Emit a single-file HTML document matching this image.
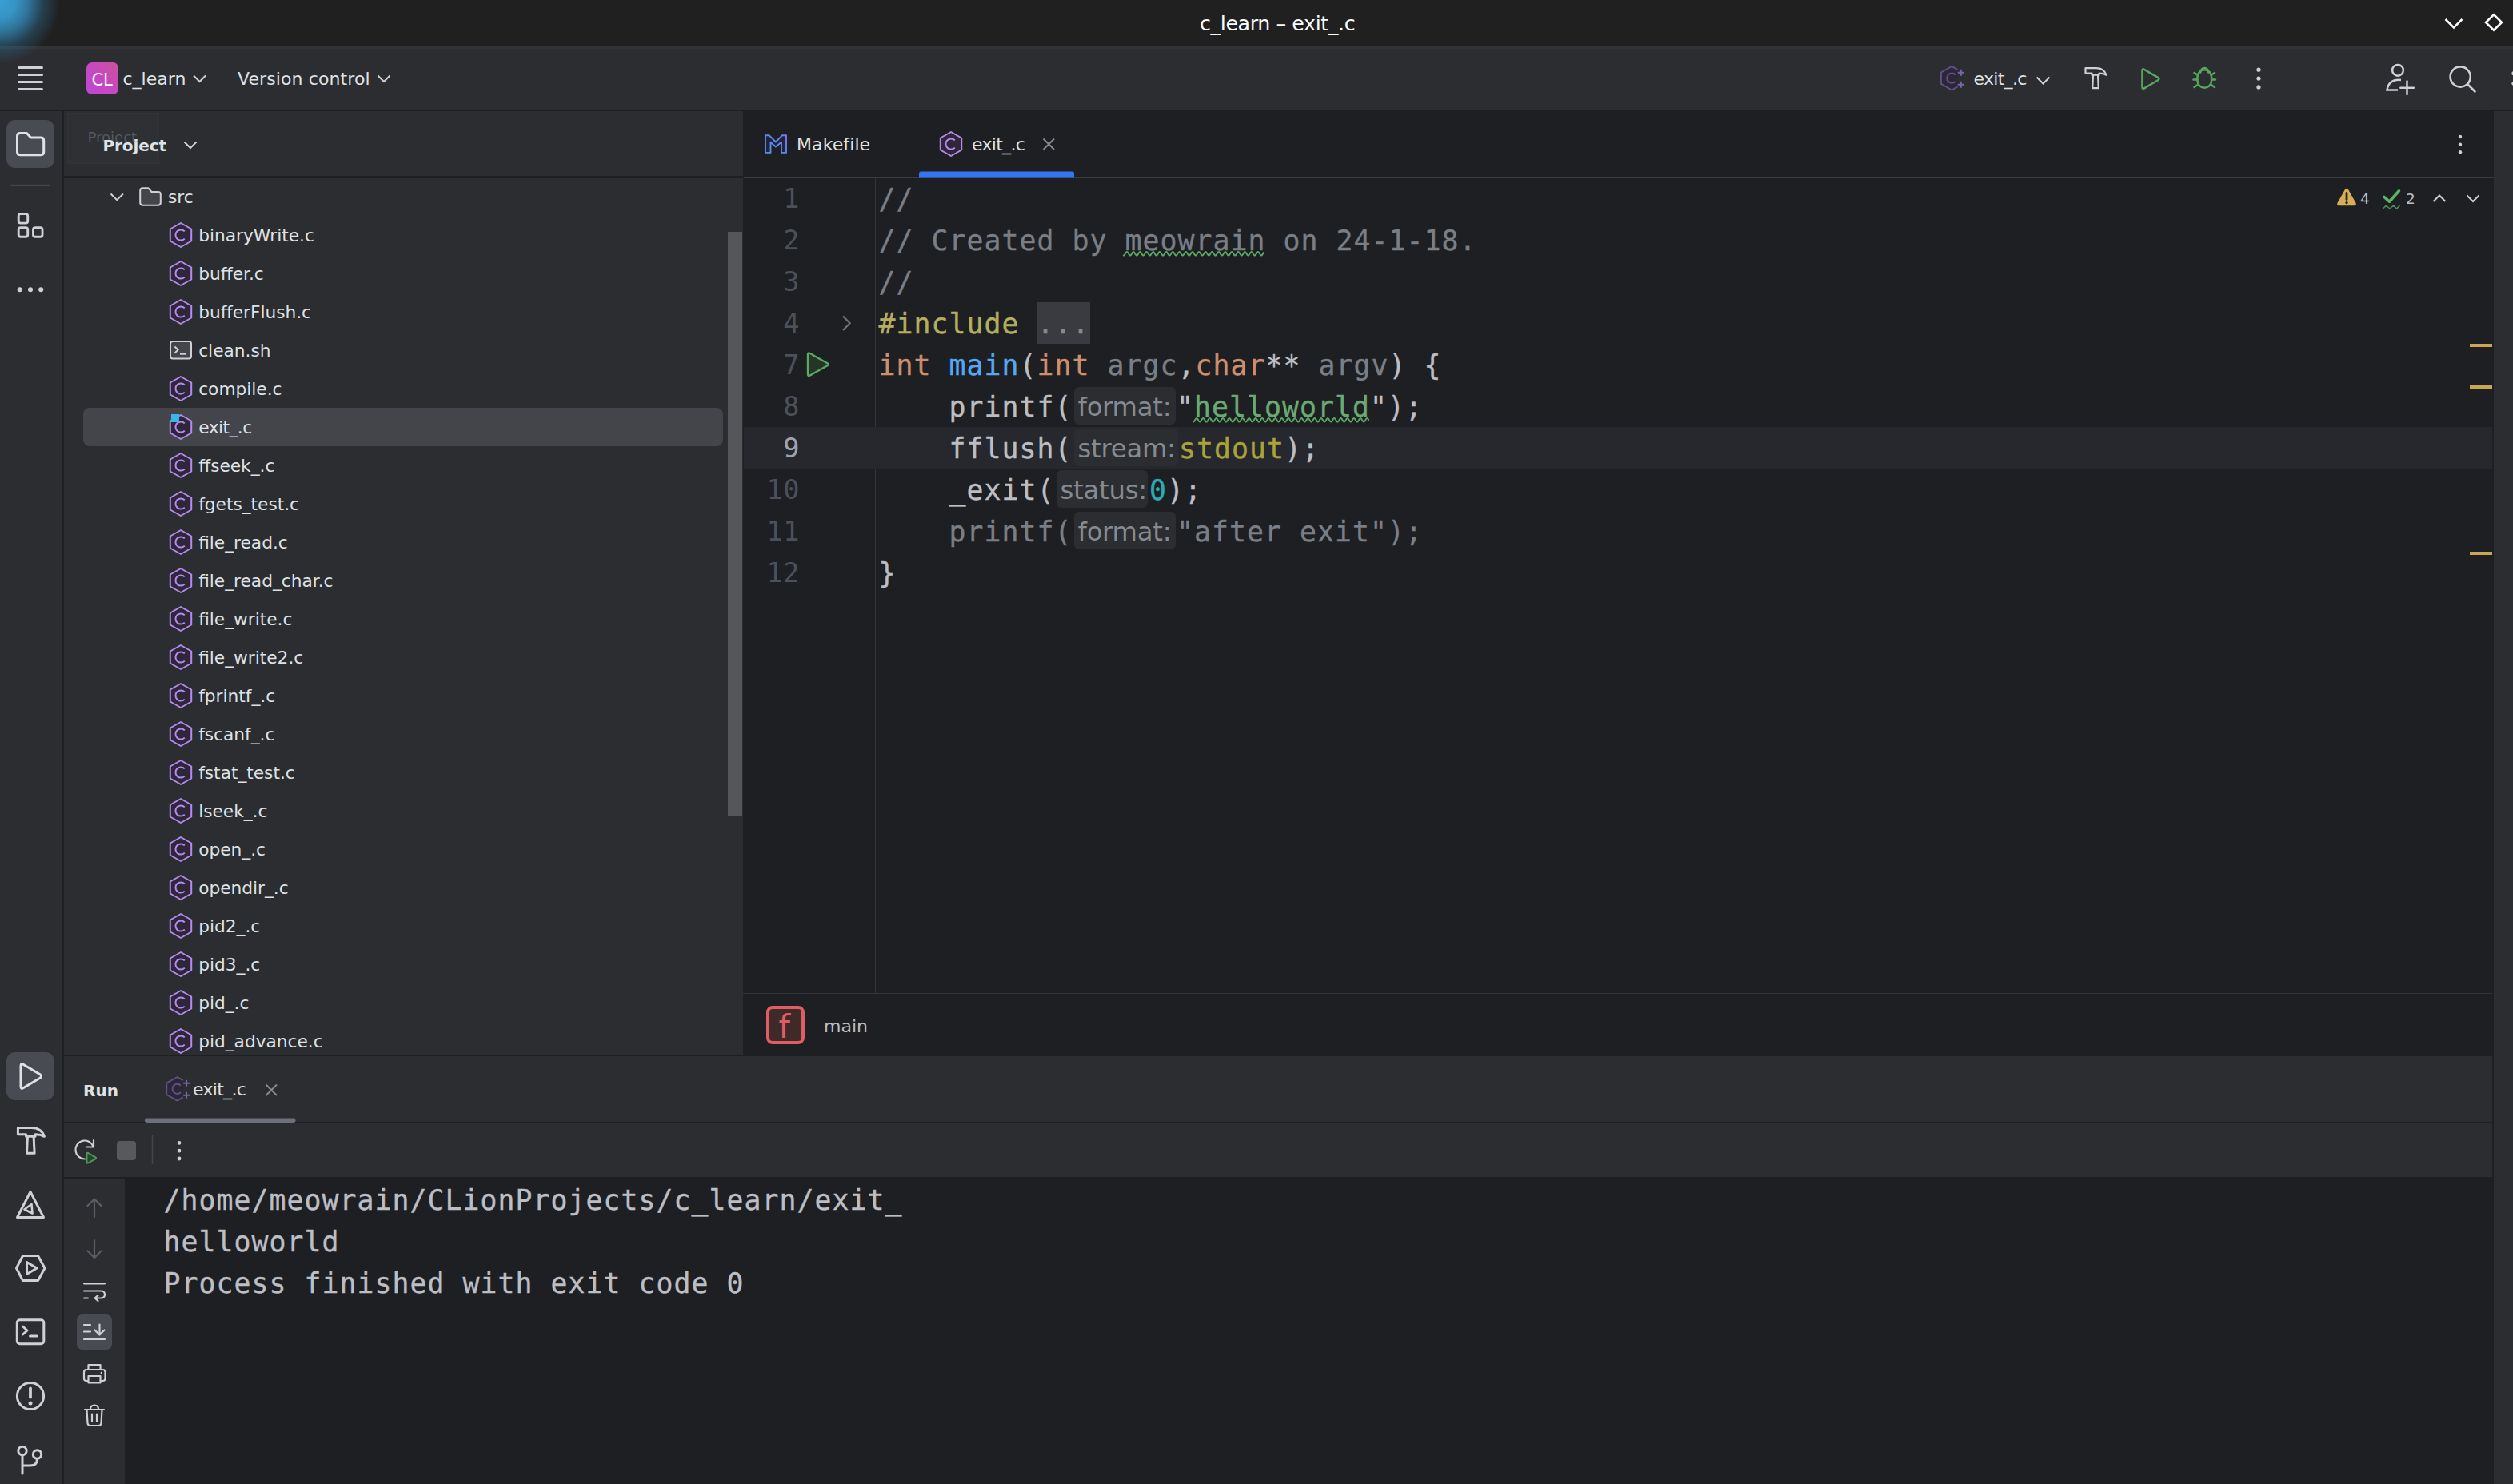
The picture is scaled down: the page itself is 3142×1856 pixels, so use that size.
<!DOCTYPE html><html><head><meta charset="utf-8"><title>c_learn – exit_.c</title><style>
*{box-sizing:border-box;margin:0;padding:0}
html,body{width:3142px;height:1856px;overflow:hidden;background:#1e1f22}
body{position:relative;font-family:"DejaVu Sans","Liberation Sans",sans-serif;font-size:22px;color:#dfe1e5;-webkit-font-smoothing:antialiased}
.abs{position:absolute}
.t{position:absolute;white-space:pre;line-height:1}
svg{display:block;overflow:visible}
.mono{font-family:"DejaVu Sans Mono","Liberation Mono",monospace}
.row{position:absolute;left:0;width:848px;height:48px;line-height:50px;white-space:pre;font-size:21.7px}
.row .lbl{position:absolute;left:168.2px;top:0}
.row svg{position:absolute}
.code{position:absolute;left:1098.5px;height:52px;line-height:52px;font-size:34.8px;letter-spacing:1.05px;-webkit-text-stroke:.35px currentColor;white-space:pre;color:#bcbec4}
.ln{position:absolute;left:930px;width:70px;text-align:right;height:52px;line-height:52px;font-size:33.6px;letter-spacing:.5px;color:#4b5059;white-space:pre}
.k{color:#cf8e6d}.fn{color:#56a8f5}.c{color:#7a7e85}.s{color:#6aab73}.n{color:#2aacb8}.m{color:#b3ae60}.g{color:#7a7e85}.mac{color:#a9a33a}
.hint{display:inline-block;vertical-align:top;height:52px;position:relative}
.hint i{position:absolute;left:2px;top:.6px;height:47px;border-radius:6px;background:#2b2d30;display:block}
.hint b{-webkit-text-stroke:0;position:absolute;left:7px;top:0;font:normal 32.2px/52px "DejaVu Sans","Liberation Sans",sans-serif;color:#868a91;letter-spacing:-0.2px}
.con{position:absolute;left:204.5px;height:52px;line-height:52px;font-size:34.8px;letter-spacing:1.05px;-webkit-text-stroke:.35px currentColor;white-space:pre;color:#bcbec4}
</style></head><body>
<div class="abs" style="left:0;top:0;width:3142px;height:58px;background:#202020"></div>
<div class="abs" style="left:0;top:58px;width:3142px;height:81px;background:#2b2d30;border-top:3px solid #313338;border-bottom:1px solid #1e1f22"></div>
<div class="abs" style="left:0;top:0;width:110px;height:120px;background:radial-gradient(ellipse 75px 78px at 0px 2px,#3a9ed3 0%,#3794c6 26%,rgba(52,140,188,.78) 48%,rgba(48,128,172,.34) 72%,rgba(45,120,165,0) 100%)"></div>
<div class="abs" style="left:0;top:139px;width:78px;height:1717px;background:#2b2d30"></div>
<div class="abs" style="left:80px;top:139px;width:849px;height:1181px;background:#2b2d30"></div>
<div class="abs" style="left:80px;top:220.4px;width:849px;height:1.4px;background:#1e1f22"></div>
<div class="abs" style="left:930px;top:221px;width:2188px;height:1px;background:#393b40"></div>
<div class="abs" style="left:1094px;top:222px;width:1px;height:1020px;background:#313438"></div>
<div class="abs" style="left:930px;top:534px;width:2186px;height:52px;background:#26282e"></div>
<div class="abs" style="left:929px;top:1242px;width:2187px;height:1px;background:#313438"></div>
<div class="abs" style="left:3118px;top:139px;width:24px;height:1717px;background:#2b2d30"></div>
<div class="abs" style="left:80px;top:1320.6px;width:3036px;height:151.4px;background:#2b2d30"></div>
<div class="abs" style="left:80px;top:1403px;width:3036px;height:1px;background:#1e1f22"></div>
<div class="abs" style="left:80px;top:1472px;width:76px;height:384px;background:#2b2d30;border-top:2px solid #1e1f22"></div>
<div class="t" style="left:1500px;top:13.5px;font-size:25.3px;line-height:32px;color:#fcfcfc;letter-spacing:-0.4px">c_learn – exit_.c</div>
<svg class="abs" style="left:3050px;top:10px" width="90" height="40" viewBox="3050 10 90 40"><path d="M3057.5 24 L3068 34.5 L3078.5 24" fill="none" stroke="#fcfcfc" stroke-width="2.6"/><path d="M3118 18.2 L3128 28 L3118 37.8 L3108 28 Z" fill="none" stroke="#fcfcfc" stroke-width="2.6"/></svg>
<svg class="abs" style="left:0;top:58px" width="3142" height="81" viewBox="0 58 3142 81">
<path d="M23.5 84.5 H52.5" stroke="#ced0d6" stroke-width="3" stroke-linecap="round"/>
<path d="M23.5 93.5 H52.5" stroke="#ced0d6" stroke-width="3" stroke-linecap="round"/>
<path d="M23.5 102.5 H52.5" stroke="#ced0d6" stroke-width="3" stroke-linecap="round"/>
<path d="M23.5 111.5 H52.5" stroke="#ced0d6" stroke-width="3" stroke-linecap="round"/>
<defs><linearGradient id="clg" x1="0" y1="1" x2="1" y2="0"><stop offset="0" stop-color="#bf46d6"/><stop offset=".5" stop-color="#c648c0"/><stop offset="1" stop-color="#cb539a"/></linearGradient></defs>
<rect x="108" y="78" width="40" height="40" rx="7" fill="url(#clg)"/>
<path d="M242 94.5 L249.5 102 L257 94.5" fill="none" stroke="#ced0d6" stroke-width="2"/>
<path d="M472.5 94.5 L480 102 L487.5 94.5" fill="none" stroke="#ced0d6" stroke-width="2"/>
<path d="M2546.5 96.5 L2554.5 104.5 L2562.5 96.5" fill="none" stroke="#ced0d6" stroke-width="2"/>
<g transform="translate(2440.3 97.7)" fill="none" stroke-width="2"><path d="M7.2 -10.6 L0 -14.8 L-13.4 -7.2 V7.2 L0 14.8 L7.2 10.6" stroke="#5f5183" fill="#2c2737" stroke-linejoin="round"/><path d="M4.4 -4.2 A6.1 6.1 0 1 0 4.4 4.2" stroke="#5f5183"/><path d="M11.5 -11 V-3 M7.5 -7 H15.5 M11.5 4 V12 M7.5 8 H15.5" stroke="#7a64aa"/></g>
<g transform="translate(2606 83.2) scale(1.0)" fill="none" stroke="#ced0d6" stroke-width="2.2" stroke-linejoin="round"><path d="M1.5 2 H15 C21 2 25.5 5 27.5 10.5 C24 8.5 21.5 8.5 18.5 8.5 V10.5 H9.5 V8.5 H1.5 Z"/><path d="M11 10.5 L10.2 27 H17.8 L17 10.5"/></g>
<path d="M2678.5 88 V109 Q2678.5 111.5 2681 110.3 L2698.5 100 Q2700.3 98.6 2698.5 97.2 L2681 86.8 Q2678.5 85.5 2678.5 88 Z" fill="none" stroke="#57a65e" stroke-width="2.6" stroke-linejoin="round"/>
<g fill="none" stroke="#57a65e" stroke-width="2.5" stroke-linecap="round"><path d="M2747.5 96 A8.8 8.8 0 0 1 2765.1 96 V100.5 A8.8 9.3 0 0 1 2747.5 100.5 Z"/><path d="M2751.3 90.5 A5 5.5 0 0 1 2761.3 90.5"/><path d="M2743.5 91 L2748 94 M2769 91 L2764.5 94 M2742.5 99.5 H2747 M2765.5 99.5 H2770 M2743.5 109 L2748.5 105.5 M2769 109 L2764 105.5"/></g>
<circle cx="2824" cy="87.2" r="2.6" fill="#ced0d6"/>
<circle cx="2824" cy="98.1" r="2.6" fill="#ced0d6"/>
<circle cx="2824" cy="108.9" r="2.6" fill="#ced0d6"/>
<g fill="none" stroke="#ced0d6" stroke-width="2.5"><circle cx="2998" cy="87.8" r="6.9"/><path d="M3002 100 Q2987 98.5 2984.5 112.5 H2998"/><path d="M3009.5 101.5 V118 M3001.3 109.7 H3017.8" stroke-linecap="round"/></g>
<g fill="none" stroke="#ced0d6" stroke-width="2.6" stroke-linecap="round"><circle cx="3076.2" cy="96" r="12.6"/><path d="M3085.5 105.5 L3094.5 114.5"/></g>
<circle cx="3143" cy="91.7" r="2.6" fill="#ced0d6"/><circle cx="3143" cy="104.3" r="2.6" fill="#ced0d6"/>
</svg>
<div class="t" style="left:114.6px;top:87px;font-size:21px;line-height:26px;color:#fff;letter-spacing:-0.3px">CL</div>
<div class="t" style="left:153.5px;top:85px;font-size:22px;line-height:28px">c_learn</div>
<div class="t" style="left:297px;top:85px;font-size:22px;line-height:28px;letter-spacing:.1px">Version control</div>
<div class="t" style="left:2467.5px;top:85px;font-size:22px;line-height:28px;letter-spacing:-.7px">exit_.c</div>
<svg class="abs" style="left:0;top:139px" width="78" height="1717" viewBox="0 139 78 1717">
<rect x="8" y="150" width="60" height="60" rx="11" fill="#494b52"/>
<path d="M21.5 170 Q21.5 166.5 25 166.5 H33.5 L38.5 172 H51 Q54.7 172 54.7 175.7 V190 Q54.7 193.7 51 193.7 H25 Q21.5 193.7 21.5 190 Z" fill="none" stroke="#dfe1e5" stroke-width="3" stroke-linejoin="round"/>
<path d="M14 231.7 H62" stroke="#43454a" stroke-width="2" stroke-linecap="round"/>
<g fill="none" stroke="#ced0d6" stroke-width="2.9"><rect x="23.2" y="267.6" width="11.5" height="11.5" rx="2.5"/><rect x="23.2" y="284.8" width="11.5" height="11.5" rx="2.5"/><rect x="41.5" y="284.8" width="11.5" height="11.5" rx="2.5"/></g>
<circle cx="24.7" cy="362.3" r="3" fill="#ced0d6"/>
<circle cx="38" cy="362.3" r="3" fill="#ced0d6"/>
<circle cx="51.2" cy="362.3" r="3" fill="#ced0d6"/>
<rect x="8" y="1316" width="60" height="60" rx="11" fill="#494b52"/>
<path d="M26 1333 V1359 Q26 1362.5 29 1360.8 L50.5 1348 Q52.5 1346 50.5 1344 L29 1331.2 Q26 1329.5 26 1333 Z" fill="none" stroke="#dfe1e5" stroke-width="3" stroke-linejoin="round"/>
<g transform="translate(20.5 1408) scale(1.27)" fill="none" stroke="#ced0d6" stroke-width="2.3622047244094486" stroke-linejoin="round"><path d="M1.5 2 H15 C21 2 25.5 5 27.5 10.5 C24 8.5 21.5 8.5 18.5 8.5 V10.5 H9.5 V8.5 H1.5 Z"/><path d="M11 10.5 L10.2 27 H17.8 L17 10.5"/></g>
<g fill="none" stroke="#ced0d6" stroke-width="3" stroke-linejoin="round"><path d="M38 1490.5 L54.5 1522.5 H21.5 Z"/><path d="M39.5 1506 L40.5 1517.5 L30.5 1512.5 Z" stroke-width="2.6"/></g>
<g fill="none" stroke="#ced0d6" stroke-width="3" stroke-linejoin="round"><path d="M28.5 1570.5 H47.5 L56 1586 L47.5 1601.5 H28.5 L20.5 1586 Z"/><path d="M33.5 1578.5 V1593.5 L46 1586 Z"/></g>
<g fill="none" stroke="#ced0d6" stroke-width="3" stroke-linejoin="round" stroke-linecap="round"><rect x="21.3" y="1650.8" width="33.5" height="30" rx="3.5"/><path d="M28.5 1659 L34 1664 L28.5 1669 M37.5 1671 H46" stroke-width="3"/></g>
<g fill="none" stroke="#ced0d6" stroke-width="3" stroke-linecap="round"><circle cx="38" cy="1746" r="16.6"/><path d="M38 1736.5 V1747.5" stroke-width="3.8"/></g><circle cx="38" cy="1755" r="2.5" fill="#ced0d6"/>
<g fill="none" stroke="#ced0d6" stroke-width="3" stroke-linecap="round"><circle cx="28" cy="1814.5" r="5.2"/><circle cx="46.5" cy="1819" r="5.2"/><path d="M28 1820 V1843 M46.5 1824.5 Q46.5 1833 38 1833 H28.5"/></g>
</svg>
<div class="abs" style="left:84px;top:141px;width:115px;height:64px;background:rgba(255,255,255,.014);border:1px solid rgba(255,255,255,.016)"></div>
<div class="t" style="left:109.5px;top:161px;font-size:18px;line-height:22px;color:#55585e">Project</div>
<div class="t" style="left:128.5px;top:169px;font-size:20px;line-height:26px;font-weight:bold;color:#dfe1e5;letter-spacing:-0.1px">Project</div>
<svg class="abs" style="left:228px;top:172px" width="22" height="18" viewBox="228 172 22 18"><path d="M230.5 177.5 L238 185 L245.5 177.5" fill="none" stroke="#ced0d6" stroke-width="2"/></svg>
<div class="abs" style="left:80px;top:222px;width:848px;height:1097px;overflow:hidden">
<div class="row" style="top:0px"><svg style="left:0;top:0" width="200" height="48" viewBox="80 222 200 48"><path d="M138.5 242.5 L146.2 250.2 L154 242.5" fill="none" stroke="#ced0d6" stroke-width="2"/><path d="M175.2 238.5 Q175.2 235.3 178.4 235.3 H185.5 L189.5 240 H197.6 Q200.8 240 200.8 243.2 V253.5 Q200.8 256.7 197.6 256.7 H178.4 Q175.2 256.7 175.2 253.5 Z" fill="#43454a" stroke="#ced0d6" stroke-width="2" stroke-linejoin="round"/></svg><span class="lbl" style="left:130px">src</span></div>
<div class="row" style="top:48px"><svg style="left:130px;top:7px" width="32" height="34" viewBox="-2 -1 32 34"><polygon points="14.0,1.0 27.2,8.5 27.2,23.5 14.0,31.0 0.8,23.5 0.8,8.5" fill="#2f2739" stroke="#b38cf0" stroke-width="2" stroke-linejoin="round"/><path d="M18.8 11.4 A6.6 6.6 0 1 0 18.8 20.6" fill="none" stroke="#b38cf0" stroke-width="2"/></svg><span class="lbl">binaryWrite.c</span></div>
<div class="row" style="top:96px"><svg style="left:130px;top:7px" width="32" height="34" viewBox="-2 -1 32 34"><polygon points="14.0,1.0 27.2,8.5 27.2,23.5 14.0,31.0 0.8,23.5 0.8,8.5" fill="#2f2739" stroke="#b38cf0" stroke-width="2" stroke-linejoin="round"/><path d="M18.8 11.4 A6.6 6.6 0 1 0 18.8 20.6" fill="none" stroke="#b38cf0" stroke-width="2"/></svg><span class="lbl">buffer.c</span></div>
<div class="row" style="top:144px"><svg style="left:130px;top:7px" width="32" height="34" viewBox="-2 -1 32 34"><polygon points="14.0,1.0 27.2,8.5 27.2,23.5 14.0,31.0 0.8,23.5 0.8,8.5" fill="#2f2739" stroke="#b38cf0" stroke-width="2" stroke-linejoin="round"/><path d="M18.8 11.4 A6.6 6.6 0 1 0 18.8 20.6" fill="none" stroke="#b38cf0" stroke-width="2"/></svg><span class="lbl">bufferFlush.c</span></div>
<div class="row" style="top:192px"><svg style="left:130px;top:10px" width="32" height="28" viewBox="-2 -2 32 28"><rect x="1" y="1" width="26" height="21.6" rx="3" fill="#43454a" stroke="#ced0d6" stroke-width="2"/><path d="M6.5 7.5 L10.5 11.5 L6.5 15.5" fill="none" stroke="#ced0d6" stroke-width="2"/><path d="M13 16.5 H20.5" stroke="#ced0d6" stroke-width="2.4"/></svg><span class="lbl">clean.sh</span></div>
<div class="row" style="top:240px"><svg style="left:130px;top:7px" width="32" height="34" viewBox="-2 -1 32 34"><polygon points="14.0,1.0 27.2,8.5 27.2,23.5 14.0,31.0 0.8,23.5 0.8,8.5" fill="#2f2739" stroke="#b38cf0" stroke-width="2" stroke-linejoin="round"/><path d="M18.8 11.4 A6.6 6.6 0 1 0 18.8 20.6" fill="none" stroke="#b38cf0" stroke-width="2"/></svg><span class="lbl">compile.c</span></div>
<div class="abs" style="left:24px;top:288px;width:800px;height:48px;border-radius:8px;background:#43454a"></div>
<div class="row" style="top:288px"><svg style="left:130px;top:7px" width="32" height="34" viewBox="-2 -1 32 34"><polygon points="14.0,1.0 27.2,8.5 27.2,23.5 14.0,31.0 0.8,23.5 0.8,8.5" fill="#2f2739" stroke="#b38cf0" stroke-width="2" stroke-linejoin="round"/><path d="M18.8 11.4 A6.6 6.6 0 1 0 18.8 20.6" fill="none" stroke="#b38cf0" stroke-width="2"/><rect x="2" y="0" width="10" height="10" fill="#3bb4e6"/></svg><span class="lbl" style="letter-spacing:-.5px">exit_.c</span></div>
<div class="row" style="top:336px"><svg style="left:130px;top:7px" width="32" height="34" viewBox="-2 -1 32 34"><polygon points="14.0,1.0 27.2,8.5 27.2,23.5 14.0,31.0 0.8,23.5 0.8,8.5" fill="#2f2739" stroke="#b38cf0" stroke-width="2" stroke-linejoin="round"/><path d="M18.8 11.4 A6.6 6.6 0 1 0 18.8 20.6" fill="none" stroke="#b38cf0" stroke-width="2"/></svg><span class="lbl">ffseek_.c</span></div>
<div class="row" style="top:384px"><svg style="left:130px;top:7px" width="32" height="34" viewBox="-2 -1 32 34"><polygon points="14.0,1.0 27.2,8.5 27.2,23.5 14.0,31.0 0.8,23.5 0.8,8.5" fill="#2f2739" stroke="#b38cf0" stroke-width="2" stroke-linejoin="round"/><path d="M18.8 11.4 A6.6 6.6 0 1 0 18.8 20.6" fill="none" stroke="#b38cf0" stroke-width="2"/></svg><span class="lbl">fgets_test.c</span></div>
<div class="row" style="top:432px"><svg style="left:130px;top:7px" width="32" height="34" viewBox="-2 -1 32 34"><polygon points="14.0,1.0 27.2,8.5 27.2,23.5 14.0,31.0 0.8,23.5 0.8,8.5" fill="#2f2739" stroke="#b38cf0" stroke-width="2" stroke-linejoin="round"/><path d="M18.8 11.4 A6.6 6.6 0 1 0 18.8 20.6" fill="none" stroke="#b38cf0" stroke-width="2"/></svg><span class="lbl">file_read.c</span></div>
<div class="row" style="top:480px"><svg style="left:130px;top:7px" width="32" height="34" viewBox="-2 -1 32 34"><polygon points="14.0,1.0 27.2,8.5 27.2,23.5 14.0,31.0 0.8,23.5 0.8,8.5" fill="#2f2739" stroke="#b38cf0" stroke-width="2" stroke-linejoin="round"/><path d="M18.8 11.4 A6.6 6.6 0 1 0 18.8 20.6" fill="none" stroke="#b38cf0" stroke-width="2"/></svg><span class="lbl">file_read_char.c</span></div>
<div class="row" style="top:528px"><svg style="left:130px;top:7px" width="32" height="34" viewBox="-2 -1 32 34"><polygon points="14.0,1.0 27.2,8.5 27.2,23.5 14.0,31.0 0.8,23.5 0.8,8.5" fill="#2f2739" stroke="#b38cf0" stroke-width="2" stroke-linejoin="round"/><path d="M18.8 11.4 A6.6 6.6 0 1 0 18.8 20.6" fill="none" stroke="#b38cf0" stroke-width="2"/></svg><span class="lbl">file_write.c</span></div>
<div class="row" style="top:576px"><svg style="left:130px;top:7px" width="32" height="34" viewBox="-2 -1 32 34"><polygon points="14.0,1.0 27.2,8.5 27.2,23.5 14.0,31.0 0.8,23.5 0.8,8.5" fill="#2f2739" stroke="#b38cf0" stroke-width="2" stroke-linejoin="round"/><path d="M18.8 11.4 A6.6 6.6 0 1 0 18.8 20.6" fill="none" stroke="#b38cf0" stroke-width="2"/></svg><span class="lbl">file_write2.c</span></div>
<div class="row" style="top:624px"><svg style="left:130px;top:7px" width="32" height="34" viewBox="-2 -1 32 34"><polygon points="14.0,1.0 27.2,8.5 27.2,23.5 14.0,31.0 0.8,23.5 0.8,8.5" fill="#2f2739" stroke="#b38cf0" stroke-width="2" stroke-linejoin="round"/><path d="M18.8 11.4 A6.6 6.6 0 1 0 18.8 20.6" fill="none" stroke="#b38cf0" stroke-width="2"/></svg><span class="lbl">fprintf_.c</span></div>
<div class="row" style="top:672px"><svg style="left:130px;top:7px" width="32" height="34" viewBox="-2 -1 32 34"><polygon points="14.0,1.0 27.2,8.5 27.2,23.5 14.0,31.0 0.8,23.5 0.8,8.5" fill="#2f2739" stroke="#b38cf0" stroke-width="2" stroke-linejoin="round"/><path d="M18.8 11.4 A6.6 6.6 0 1 0 18.8 20.6" fill="none" stroke="#b38cf0" stroke-width="2"/></svg><span class="lbl">fscanf_.c</span></div>
<div class="row" style="top:720px"><svg style="left:130px;top:7px" width="32" height="34" viewBox="-2 -1 32 34"><polygon points="14.0,1.0 27.2,8.5 27.2,23.5 14.0,31.0 0.8,23.5 0.8,8.5" fill="#2f2739" stroke="#b38cf0" stroke-width="2" stroke-linejoin="round"/><path d="M18.8 11.4 A6.6 6.6 0 1 0 18.8 20.6" fill="none" stroke="#b38cf0" stroke-width="2"/></svg><span class="lbl">fstat_test.c</span></div>
<div class="row" style="top:768px"><svg style="left:130px;top:7px" width="32" height="34" viewBox="-2 -1 32 34"><polygon points="14.0,1.0 27.2,8.5 27.2,23.5 14.0,31.0 0.8,23.5 0.8,8.5" fill="#2f2739" stroke="#b38cf0" stroke-width="2" stroke-linejoin="round"/><path d="M18.8 11.4 A6.6 6.6 0 1 0 18.8 20.6" fill="none" stroke="#b38cf0" stroke-width="2"/></svg><span class="lbl">lseek_.c</span></div>
<div class="row" style="top:816px"><svg style="left:130px;top:7px" width="32" height="34" viewBox="-2 -1 32 34"><polygon points="14.0,1.0 27.2,8.5 27.2,23.5 14.0,31.0 0.8,23.5 0.8,8.5" fill="#2f2739" stroke="#b38cf0" stroke-width="2" stroke-linejoin="round"/><path d="M18.8 11.4 A6.6 6.6 0 1 0 18.8 20.6" fill="none" stroke="#b38cf0" stroke-width="2"/></svg><span class="lbl">open_.c</span></div>
<div class="row" style="top:864px"><svg style="left:130px;top:7px" width="32" height="34" viewBox="-2 -1 32 34"><polygon points="14.0,1.0 27.2,8.5 27.2,23.5 14.0,31.0 0.8,23.5 0.8,8.5" fill="#2f2739" stroke="#b38cf0" stroke-width="2" stroke-linejoin="round"/><path d="M18.8 11.4 A6.6 6.6 0 1 0 18.8 20.6" fill="none" stroke="#b38cf0" stroke-width="2"/></svg><span class="lbl">opendir_.c</span></div>
<div class="row" style="top:912px"><svg style="left:130px;top:7px" width="32" height="34" viewBox="-2 -1 32 34"><polygon points="14.0,1.0 27.2,8.5 27.2,23.5 14.0,31.0 0.8,23.5 0.8,8.5" fill="#2f2739" stroke="#b38cf0" stroke-width="2" stroke-linejoin="round"/><path d="M18.8 11.4 A6.6 6.6 0 1 0 18.8 20.6" fill="none" stroke="#b38cf0" stroke-width="2"/></svg><span class="lbl">pid2_.c</span></div>
<div class="row" style="top:960px"><svg style="left:130px;top:7px" width="32" height="34" viewBox="-2 -1 32 34"><polygon points="14.0,1.0 27.2,8.5 27.2,23.5 14.0,31.0 0.8,23.5 0.8,8.5" fill="#2f2739" stroke="#b38cf0" stroke-width="2" stroke-linejoin="round"/><path d="M18.8 11.4 A6.6 6.6 0 1 0 18.8 20.6" fill="none" stroke="#b38cf0" stroke-width="2"/></svg><span class="lbl">pid3_.c</span></div>
<div class="row" style="top:1008px"><svg style="left:130px;top:7px" width="32" height="34" viewBox="-2 -1 32 34"><polygon points="14.0,1.0 27.2,8.5 27.2,23.5 14.0,31.0 0.8,23.5 0.8,8.5" fill="#2f2739" stroke="#b38cf0" stroke-width="2" stroke-linejoin="round"/><path d="M18.8 11.4 A6.6 6.6 0 1 0 18.8 20.6" fill="none" stroke="#b38cf0" stroke-width="2"/></svg><span class="lbl">pid_.c</span></div>
<div class="row" style="top:1056px"><svg style="left:130px;top:7px" width="32" height="34" viewBox="-2 -1 32 34"><polygon points="14.0,1.0 27.2,8.5 27.2,23.5 14.0,31.0 0.8,23.5 0.8,8.5" fill="#2f2739" stroke="#b38cf0" stroke-width="2" stroke-linejoin="round"/><path d="M18.8 11.4 A6.6 6.6 0 1 0 18.8 20.6" fill="none" stroke="#b38cf0" stroke-width="2"/></svg><span class="lbl">pid_advance.c</span></div>
</div>
<div class="abs" style="left:910px;top:290px;width:18px;height:731px;background:#55565a"></div>
<div class="abs" style="left:80px;top:1320px;width:849px;height:1.4px;background:#1e1f22"></div>
<svg class="abs" style="left:930px;top:139px" width="2186" height="83" viewBox="930 139 2186 83">
<defs><linearGradient id="mkg" x1="0" y1="1" x2="1" y2="0"><stop offset="0" stop-color="#5590ee"/><stop offset=".6" stop-color="#5d88f0"/><stop offset="1" stop-color="#8178f5"/></linearGradient></defs><path d="M957 169.3 H961.9 L969.9 177.5 L977.9 169.3 H983 V190.9 H977 V177.8 L969.9 183.6 L963.5 177.8 V190.9 H957 Z" fill="#1f2438" stroke="url(#mkg)" stroke-width="1.9" stroke-linejoin="round"/>
<polygon points="1189.0,165.0 1202.2,172.5 1202.2,187.5 1189.0,195.0 1175.8,187.5 1175.8,172.5" fill="#2f2739" stroke="#b38cf0" stroke-width="2" stroke-linejoin="round"/><path d="M1193.8 175.4 A6.6 6.6 0 1 0 1193.8 184.6" fill="none" stroke="#b38cf0" stroke-width="2"/>
<path d="M1304.5 173.5 L1318 187 M1318 173.5 L1304.5 187" stroke="#868a91" stroke-width="2" fill="none"/>
<path d="M1149 221.5 V217 Q1149 214.5 1151.5 214.5 H1340.5 Q1343 214.5 1343 217 V221.5 Z" fill="#3574f0"/>
<circle cx="3076" cy="171" r="2.2" fill="#ced0d6"/>
<circle cx="3076" cy="180.7" r="2.2" fill="#ced0d6"/>
<circle cx="3076" cy="190.3" r="2.2" fill="#ced0d6"/>
</svg>
<div class="t" style="left:996px;top:167px;font-size:22px;line-height:28px;letter-spacing:.1px">Makefile</div>
<div class="t" style="left:1215px;top:167px;font-size:22px;line-height:28px;letter-spacing:-.7px">exit_.c</div>
<svg class="abs" style="left:2915px;top:230px" width="200" height="40" viewBox="2915 230 200 40">
<path d="M2931.7 237.5 Q2934 234 2936.3 237.5 L2945.3 253.5 Q2947 257.3 2943 257.3 H2925 Q2921 257.3 2922.7 253.5 Z" fill="#d6ae58"/><path d="M2934 241.5 V249.5" stroke="#2b2419" stroke-width="2.8" stroke-linecap="round"/><circle cx="2934" cy="253.6" r="1.7" fill="#2b2419"/>
<path d="M2981 246.5 L2987.5 252.2 L2999.5 238.8" fill="none" stroke="#5fb26a" stroke-width="3.6" stroke-linecap="round" stroke-linejoin="round"/>
<path d="M2979.5 261 L2983.5 257 L2988 261 L2992.5 257 L2996.5 261 L3000.5 257" fill="none" stroke="#4e8a57" stroke-width="1.6"/>
<path d="M3042.5 252 L3050 244.5 L3057.5 252" fill="none" stroke="#ced0d6" stroke-width="2"/>
<path d="M3084.5 244.5 L3092 252 L3099.5 244.5" fill="none" stroke="#ced0d6" stroke-width="2"/>
</svg>
<div class="t" style="left:2951px;top:237px;font-size:18.5px;line-height:24px;color:#bcbec4">4</div>
<div class="t" style="left:3008px;top:237px;font-size:18.5px;line-height:24px;color:#bcbec4">2</div>
<div class="abs" style="left:3088px;top:430px;width:28px;height:4px;background:#c9a752"></div>
<div class="abs" style="left:3088px;top:482px;width:28px;height:4px;background:#c9a752"></div>
<div class="abs" style="left:3088px;top:690px;width:28px;height:4px;background:#c9a752"></div>
<div class="ln mono" style="top:223.2px">1</div>
<div class="ln mono" style="top:275.2px">2</div>
<div class="ln mono" style="top:327.2px">3</div>
<div class="ln mono" style="top:379.2px">4</div>
<div class="ln mono" style="top:431.2px">7</div>
<div class="ln mono" style="top:483.2px">8</div>
<div class="ln mono" style="top:535.2px;color:#a1a3ab">9</div>
<div class="ln mono" style="top:587.2px">10</div>
<div class="ln mono" style="top:639.2px">11</div>
<div class="ln mono" style="top:691.2px">12</div>
<svg class="abs" style="left:1000px;top:380px" width="90" height="100" viewBox="1000 380 90 100"><path d="M1054 395.5 L1062.7 404.2 L1054 413" fill="none" stroke="#6f737a" stroke-width="2.2"/><path d="M1010 443.5 V468 Q1010 471 1012.8 469.5 L1034.5 457.3 Q1036.5 455.8 1034.5 454.3 L1012.8 442 Q1010 440.5 1010 443.5 Z" fill="#253627" stroke="#5aa862" stroke-width="2.4" stroke-linejoin="round"/></svg>
<div class="code mono" style="top:223.4px"><span class="c">//</span></div>
<div class="code mono" style="top:275.4px"><span class="c">// Created by meowrain on 24-1-18.</span></div>
<div class="code mono" style="top:327.4px"><span class="c">//</span></div>
<div class="code mono" style="top:379.4px"><span class="m">#include</span> <span style="background:#393b40;color:#868a91;display:inline-block;height:52px;margin-top:-1.4px;padding-top:1.4px;vertical-align:top;line-height:52px">...</span></div>
<div class="code mono" style="top:431.4px"><span class="k">int</span> <span class="fn">main</span>(<span class="k">int</span> <span class="g">argc</span>,<span class="k">char</span>** <span class="g">argv</span>) {</div>
<div class="code mono" style="top:483.4px">    printf(<span class="hint" style="width:130.6px"><i style="width:127.4px"></i><b>format:</b></span>"<span class="s">helloworld</span>");</div>
<div class="code mono" style="top:535.4px">    fflush(<span class="hint" style="width:133.4px"><i style="width:130.3px"></i><b>stream:</b></span><span class="mac">stdout</span>);</div>
<div class="code mono" style="top:587.4px">    _exit(<span class="hint" style="width:118.4px"><i style="width:114.6px"></i><b>status:</b></span><span class="n">0</span>);</div>
<div class="code mono" style="top:639.4px"><span class="g">    printf(<span class="hint" style="width:130.6px"><i style="width:127.4px"></i><b>format:</b></span>"after exit");</span></div>
<div class="code mono" style="top:691.4px">}</div>
<svg class="abs" style="left:0;top:0" width="3142" height="1856" viewBox="0 0 3142 1856"><path d="M1404.8 319.60 L1405.6 319.18 L1406.4 318.08 L1407.2 316.69 L1408.0 315.53 L1408.8 315.01 L1409.6 315.32 L1410.4 316.36 L1411.2 317.74 L1412.0 318.96 L1412.8 319.57 L1413.6 319.36 L1414.4 318.40 L1415.2 317.04 L1416.0 315.77 L1416.8 315.06 L1417.6 315.17 L1418.4 316.05 L1419.2 317.39 L1420.0 318.69 L1420.8 319.49 L1421.6 319.49 L1422.4 318.69 L1423.2 317.39 L1424.0 316.05 L1424.8 315.17 L1425.6 315.06 L1426.4 315.77 L1427.2 317.04 L1428.0 318.40 L1428.8 319.36 L1429.6 319.57 L1430.4 318.96 L1431.2 317.74 L1432.0 316.36 L1432.8 315.32 L1433.6 315.01 L1434.4 315.53 L1435.2 316.69 L1436.0 318.08 L1436.8 319.18 L1437.6 319.60 L1438.4 319.18 L1439.2 318.08 L1440.0 316.69 L1440.8 315.53 L1441.6 315.01 L1442.4 315.32 L1443.2 316.36 L1444.0 317.74 L1444.8 318.96 L1445.6 319.57 L1446.4 319.36 L1447.2 318.40 L1448.0 317.04 L1448.8 315.77 L1449.6 315.06 L1450.4 315.17 L1451.2 316.05 L1452.0 317.39 L1452.8 318.69 L1453.6 319.49 L1454.4 319.49 L1455.2 318.69 L1456.0 317.39 L1456.8 316.05 L1457.6 315.17 L1458.4 315.06 L1459.2 315.77 L1460.0 317.04 L1460.8 318.40 L1461.6 319.36 L1462.4 319.57 L1463.2 318.96 L1464.0 317.74 L1464.8 316.36 L1465.6 315.32 L1466.4 315.01 L1467.2 315.53 L1468.0 316.69 L1468.8 318.08 L1469.6 319.18 L1470.4 319.60 L1471.2 319.18 L1472.0 318.08 L1472.8 316.69 L1473.6 315.53 L1474.4 315.01 L1475.2 315.32 L1476.0 316.36 L1476.8 317.74 L1477.6 318.96 L1478.4 319.57 L1479.2 319.36 L1480.0 318.40 L1480.8 317.04 L1481.6 315.77 L1482.4 315.06 L1483.2 315.17 L1484.0 316.05 L1484.8 317.39 L1485.6 318.69 L1486.4 319.49 L1487.2 319.49 L1488.0 318.69 L1488.8 317.39 L1489.6 316.05 L1490.4 315.17 L1491.2 315.06 L1492.0 315.77 L1492.8 317.04 L1493.6 318.40 L1494.4 319.36 L1495.2 319.57 L1496.0 318.96 L1496.8 317.74 L1497.6 316.36 L1498.4 315.32 L1499.2 315.01 L1500.0 315.53 L1500.8 316.69 L1501.6 318.08 L1502.4 319.18 L1503.2 319.60 L1504.0 319.18 L1504.8 318.08 L1505.6 316.69 L1506.4 315.53 L1507.2 315.01 L1508.0 315.32 L1508.8 316.36 L1509.6 317.74 L1510.4 318.96 L1511.2 319.57 L1512.0 319.36 L1512.8 318.40 L1513.6 317.04 L1514.4 315.77 L1515.2 315.06 L1516.0 315.17 L1516.8 316.05 L1517.6 317.39 L1518.4 318.69 L1519.2 319.49 L1520.0 319.49 L1520.8 318.69 L1521.6 317.39 L1522.4 316.05 L1523.2 315.17 L1524.0 315.06 L1524.8 315.77 L1525.6 317.04 L1526.4 318.40 L1527.2 319.36 L1528.0 319.57 L1528.8 318.96 L1529.6 317.74 L1530.4 316.36 L1531.2 315.32 L1532.0 315.01 L1532.8 315.53 L1533.6 316.69 L1534.4 318.08 L1535.2 319.18 L1536.0 319.60 L1536.8 319.18 L1537.6 318.08 L1538.4 316.69 L1539.2 315.53 L1540.0 315.01 L1540.8 315.32 L1541.6 316.36 L1542.4 317.74 L1543.2 318.96 L1544.0 319.57 L1544.8 319.36 L1545.6 318.40 L1546.4 317.04 L1547.2 315.77 L1548.0 315.06 L1548.8 315.17 L1549.6 316.05 L1550.4 317.39 L1551.2 318.69 L1552.0 319.49 L1552.8 319.49 L1553.6 318.69 L1554.4 317.39 L1555.2 316.05 L1556.0 315.17 L1556.8 315.06 L1557.6 315.77 L1558.4 317.04 L1559.2 318.40 L1560.0 319.36 L1560.8 319.57 L1561.6 318.96 L1562.4 317.74 L1563.2 316.36 L1564.0 315.32 L1564.8 315.01 L1565.6 315.53 L1566.4 316.69 L1567.2 318.08 L1568.0 319.18 L1568.8 319.60 L1569.6 319.18 L1570.4 318.08 L1571.2 316.69 L1572.0 315.53 L1572.8 315.01 L1573.6 315.32 L1574.4 316.36 L1575.2 317.74 L1576.0 318.96 L1576.8 319.57 L1577.6 319.36 L1578.4 318.40 L1579.2 317.04 L1580.0 315.77" fill="none" stroke="#5aa862" stroke-width="1.9" stroke-linejoin="round" stroke-linecap="round"/></svg>
<svg class="abs" style="left:0;top:0" width="3142" height="1856" viewBox="0 0 3142 1856"><path d="M1492.0 527.60 L1492.8 527.18 L1493.6 526.08 L1494.4 524.69 L1495.2 523.53 L1496.0 523.01 L1496.8 523.32 L1497.6 524.36 L1498.4 525.74 L1499.2 526.96 L1500.0 527.57 L1500.8 527.36 L1501.6 526.40 L1502.4 525.04 L1503.2 523.77 L1504.0 523.06 L1504.8 523.17 L1505.6 524.05 L1506.4 525.39 L1507.2 526.69 L1508.0 527.49 L1508.8 527.49 L1509.6 526.69 L1510.4 525.39 L1511.2 524.05 L1512.0 523.17 L1512.8 523.06 L1513.6 523.77 L1514.4 525.04 L1515.2 526.40 L1516.0 527.36 L1516.8 527.57 L1517.6 526.96 L1518.4 525.74 L1519.2 524.36 L1520.0 523.32 L1520.8 523.01 L1521.6 523.53 L1522.4 524.69 L1523.2 526.08 L1524.0 527.18 L1524.8 527.60 L1525.6 527.18 L1526.4 526.08 L1527.2 524.69 L1528.0 523.53 L1528.8 523.01 L1529.6 523.32 L1530.4 524.36 L1531.2 525.74 L1532.0 526.96 L1532.8 527.57 L1533.6 527.36 L1534.4 526.40 L1535.2 525.04 L1536.0 523.77 L1536.8 523.06 L1537.6 523.17 L1538.4 524.05 L1539.2 525.39 L1540.0 526.69 L1540.8 527.49 L1541.6 527.49 L1542.4 526.69 L1543.2 525.39 L1544.0 524.05 L1544.8 523.17 L1545.6 523.06 L1546.4 523.77 L1547.2 525.04 L1548.0 526.40 L1548.8 527.36 L1549.6 527.57 L1550.4 526.96 L1551.2 525.74 L1552.0 524.36 L1552.8 523.32 L1553.6 523.01 L1554.4 523.53 L1555.2 524.69 L1556.0 526.08 L1556.8 527.18 L1557.6 527.60 L1558.4 527.18 L1559.2 526.08 L1560.0 524.69 L1560.8 523.53 L1561.6 523.01 L1562.4 523.32 L1563.2 524.36 L1564.0 525.74 L1564.8 526.96 L1565.6 527.57 L1566.4 527.36 L1567.2 526.40 L1568.0 525.04 L1568.8 523.77 L1569.6 523.06 L1570.4 523.17 L1571.2 524.05 L1572.0 525.39 L1572.8 526.69 L1573.6 527.49 L1574.4 527.49 L1575.2 526.69 L1576.0 525.39 L1576.8 524.05 L1577.6 523.17 L1578.4 523.06 L1579.2 523.77 L1580.0 525.04 L1580.8 526.40 L1581.6 527.36 L1582.4 527.57 L1583.2 526.96 L1584.0 525.74 L1584.8 524.36 L1585.6 523.32 L1586.4 523.01 L1587.2 523.53 L1588.0 524.69 L1588.8 526.08 L1589.6 527.18 L1590.4 527.60 L1591.2 527.18 L1592.0 526.08 L1592.8 524.69 L1593.6 523.53 L1594.4 523.01 L1595.2 523.32 L1596.0 524.36 L1596.8 525.74 L1597.6 526.96 L1598.4 527.57 L1599.2 527.36 L1600.0 526.40 L1600.8 525.04 L1601.6 523.77 L1602.4 523.06 L1603.2 523.17 L1604.0 524.05 L1604.8 525.39 L1605.6 526.69 L1606.4 527.49 L1607.2 527.49 L1608.0 526.69 L1608.8 525.39 L1609.6 524.05 L1610.4 523.17 L1611.2 523.06 L1612.0 523.77 L1612.8 525.04 L1613.6 526.40 L1614.4 527.36 L1615.2 527.57 L1616.0 526.96 L1616.8 525.74 L1617.6 524.36 L1618.4 523.32 L1619.2 523.01 L1620.0 523.53 L1620.8 524.69 L1621.6 526.08 L1622.4 527.18 L1623.2 527.60 L1624.0 527.18 L1624.8 526.08 L1625.6 524.69 L1626.4 523.53 L1627.2 523.01 L1628.0 523.32 L1628.8 524.36 L1629.6 525.74 L1630.4 526.96 L1631.2 527.57 L1632.0 527.36 L1632.8 526.40 L1633.6 525.04 L1634.4 523.77 L1635.2 523.06 L1636.0 523.17 L1636.8 524.05 L1637.6 525.39 L1638.4 526.69 L1639.2 527.49 L1640.0 527.49 L1640.8 526.69 L1641.6 525.39 L1642.4 524.05 L1643.2 523.17 L1644.0 523.06 L1644.8 523.77 L1645.6 525.04 L1646.4 526.40 L1647.2 527.36 L1648.0 527.57 L1648.8 526.96 L1649.6 525.74 L1650.4 524.36 L1651.2 523.32 L1652.0 523.01 L1652.8 523.53 L1653.6 524.69 L1654.4 526.08 L1655.2 527.18 L1656.0 527.60 L1656.8 527.18 L1657.6 526.08 L1658.4 524.69 L1659.2 523.53 L1660.0 523.01 L1660.8 523.32 L1661.6 524.36 L1662.4 525.74 L1663.2 526.96 L1664.0 527.57 L1664.8 527.36 L1665.6 526.40 L1666.4 525.04 L1667.2 523.77 L1668.0 523.06 L1668.8 523.17 L1669.6 524.05 L1670.4 525.39 L1671.2 526.69 L1672.0 527.49 L1672.8 527.49 L1673.6 526.69 L1674.4 525.39 L1675.2 524.05 L1676.0 523.17 L1676.8 523.06 L1677.6 523.77 L1678.4 525.04 L1679.2 526.40 L1680.0 527.36 L1680.8 527.57 L1681.6 526.96 L1682.4 525.74 L1683.2 524.36 L1684.0 523.32 L1684.8 523.01 L1685.6 523.53 L1686.4 524.69 L1687.2 526.08 L1688.0 527.18 L1688.8 527.60 L1689.6 527.18 L1690.4 526.08 L1691.2 524.69 L1692.0 523.53 L1692.8 523.01 L1693.6 523.32 L1694.4 524.36 L1695.2 525.74 L1696.0 526.96 L1696.8 527.57 L1697.6 527.36 L1698.4 526.40 L1699.2 525.04 L1700.0 523.77 L1700.8 523.06 L1701.6 523.17 L1702.4 524.05 L1703.2 525.39 L1704.0 526.69 L1704.8 527.49 L1705.6 527.49 L1706.4 526.69 L1707.2 525.39 L1708.0 524.05 L1708.8 523.17 L1709.6 523.06 L1710.4 523.77 L1711.2 525.04" fill="none" stroke="#5aa862" stroke-width="1.9" stroke-linejoin="round" stroke-linecap="round"/></svg>
<svg class="abs" style="left:956px;top:1256px" width="52" height="52" viewBox="956 1256 52 52"><rect x="960" y="1260" width="44" height="44" rx="6" fill="#402929" stroke="#e05d64" stroke-width="4"/></svg>
<div class="t" style="left:973.5px;top:1260.5px;font-size:41px;line-height:46px;color:#e05d64;font-family:'DejaVu Sans',sans-serif">f</div>
<div class="t" style="left:1030px;top:1270px;font-size:22px;line-height:28px;color:#bcbec4">main</div>
<div class="t" style="left:104px;top:1350.6px;font-size:20px;line-height:26px;font-weight:bold;color:#dfe1e5">Run</div>
<svg class="abs" style="left:80px;top:1321px" width="400" height="151" viewBox="80 1321 400 151">
<g transform="translate(221.6 1361.8)" fill="none" stroke-width="2"><path d="M7.2 -10.6 L0 -14.8 L-13.4 -7.2 V7.2 L0 14.8 L7.2 10.6" stroke="#5f5183" fill="#2c2737" stroke-linejoin="round"/><path d="M4.4 -4.2 A6.1 6.1 0 1 0 4.4 4.2" stroke="#5f5183"/><path d="M11.5 -11 V-3 M7.5 -7 H15.5 M11.5 4 V12 M7.5 8 H15.5" stroke="#7a64aa"/></g>
<path d="M332.5 1356.5 L346 1370 M346 1356.5 L332.5 1370" stroke="#868a91" stroke-width="2" fill="none"/>
<rect x="181" y="1398.5" width="188.5" height="5.5" rx="2.7" fill="#6c707a"/>
<g fill="none" stroke="#ced0d6" stroke-width="2.2" stroke-linecap="round"><path d="M106 1449.5 A11.5 11.5 0 1 1 116.5 1433.5"/><path d="M117 1426 V1434.5 H108.5"/></g>
<path d="M108.5 1443 V1453.5 Q108.5 1455.5 110.3 1454.5 L119.3 1449.3 Q120.8 1448.3 119.3 1447.3 L110.3 1442 Q108.5 1441 108.5 1443 Z" fill="#1f4a27" stroke="#4f9a58" stroke-width="2" stroke-linejoin="round"/>
<rect x="146" y="1427" width="24" height="24" rx="4" fill="#58595c"/>
<path d="M190.5 1419 V1456" stroke="#43454a" stroke-width="1.5"/>
<circle cx="224" cy="1429.4" r="2.4" fill="#ced0d6"/>
<circle cx="224" cy="1439.2" r="2.4" fill="#ced0d6"/>
<circle cx="224" cy="1449" r="2.4" fill="#ced0d6"/>
</svg>
<div class="t" style="left:241px;top:1349px;font-size:22px;line-height:28px;letter-spacing:-.7px">exit_.c</div>
<svg class="abs" style="left:80px;top:1472px" width="76" height="384" viewBox="80 1472 76 384">
<g fill="none" stroke="#5a5d63" stroke-width="2.2" stroke-linecap="round" stroke-linejoin="round"><path d="M118 1522 V1499.5 M109.5 1508 L118 1499.5 L126.5 1508"/><path d="M118 1551 V1573 M109.5 1564.5 L118 1573 L126.5 1564.5"/></g>
<g fill="none" stroke="#ced0d6" stroke-width="2.2" stroke-linecap="round" stroke-linejoin="round"><path d="M105 1605.3 H131 M105 1614.5 H126 Q131 1614.5 131 1619 Q131 1623.5 126 1623.5 H119 M105 1623.5 H110 M122.5 1620 L118.5 1623.5 L122.5 1627"/></g>
<rect x="96" y="1644" width="44" height="44" rx="7" fill="#494b53"/>
<g fill="none" stroke="#ced0d6" stroke-width="2.2" stroke-linecap="round" stroke-linejoin="round"><path d="M105 1657 H113 M105 1665.5 H113 M105 1675 H131 M124.5 1656.5 V1669 M118.5 1663.5 L124.5 1669.5 L130.5 1663.5"/></g>
<g fill="none" stroke="#ced0d6" stroke-width="2.2" stroke-linejoin="round"><path d="M110.5 1713 V1707 H125.5 V1713"/><rect x="105" y="1713" width="26.5" height="14" rx="3"/><path d="M110.5 1721 H125.5 V1729.5 H110.5 Z" fill="#2b2d30"/></g><circle cx="126.8" cy="1717" r="1.2" fill="#ced0d6"/>
<g fill="none" stroke="#ced0d6" stroke-width="2.2" stroke-linejoin="round" stroke-linecap="round"><path d="M106 1763 H130 M113 1762.5 Q113 1757.5 118 1757.5 Q123 1757.5 123 1762.5 M108.5 1763.5 L109.5 1780 Q109.8 1783 113 1783 H123 Q126.2 1783 126.5 1780 L127.5 1763.5 M115 1768.5 V1777.5 M121 1768.5 V1777.5"/></g>
</svg>
<div class="con mono" style="top:1475.2px">/home/meowrain/CLionProjects/c_learn/exit_</div>
<div class="con mono" style="top:1527.2px">helloworld</div>
<div class="con mono" style="top:1579.2px">Process finished with exit code 0</div>
</body></html>
